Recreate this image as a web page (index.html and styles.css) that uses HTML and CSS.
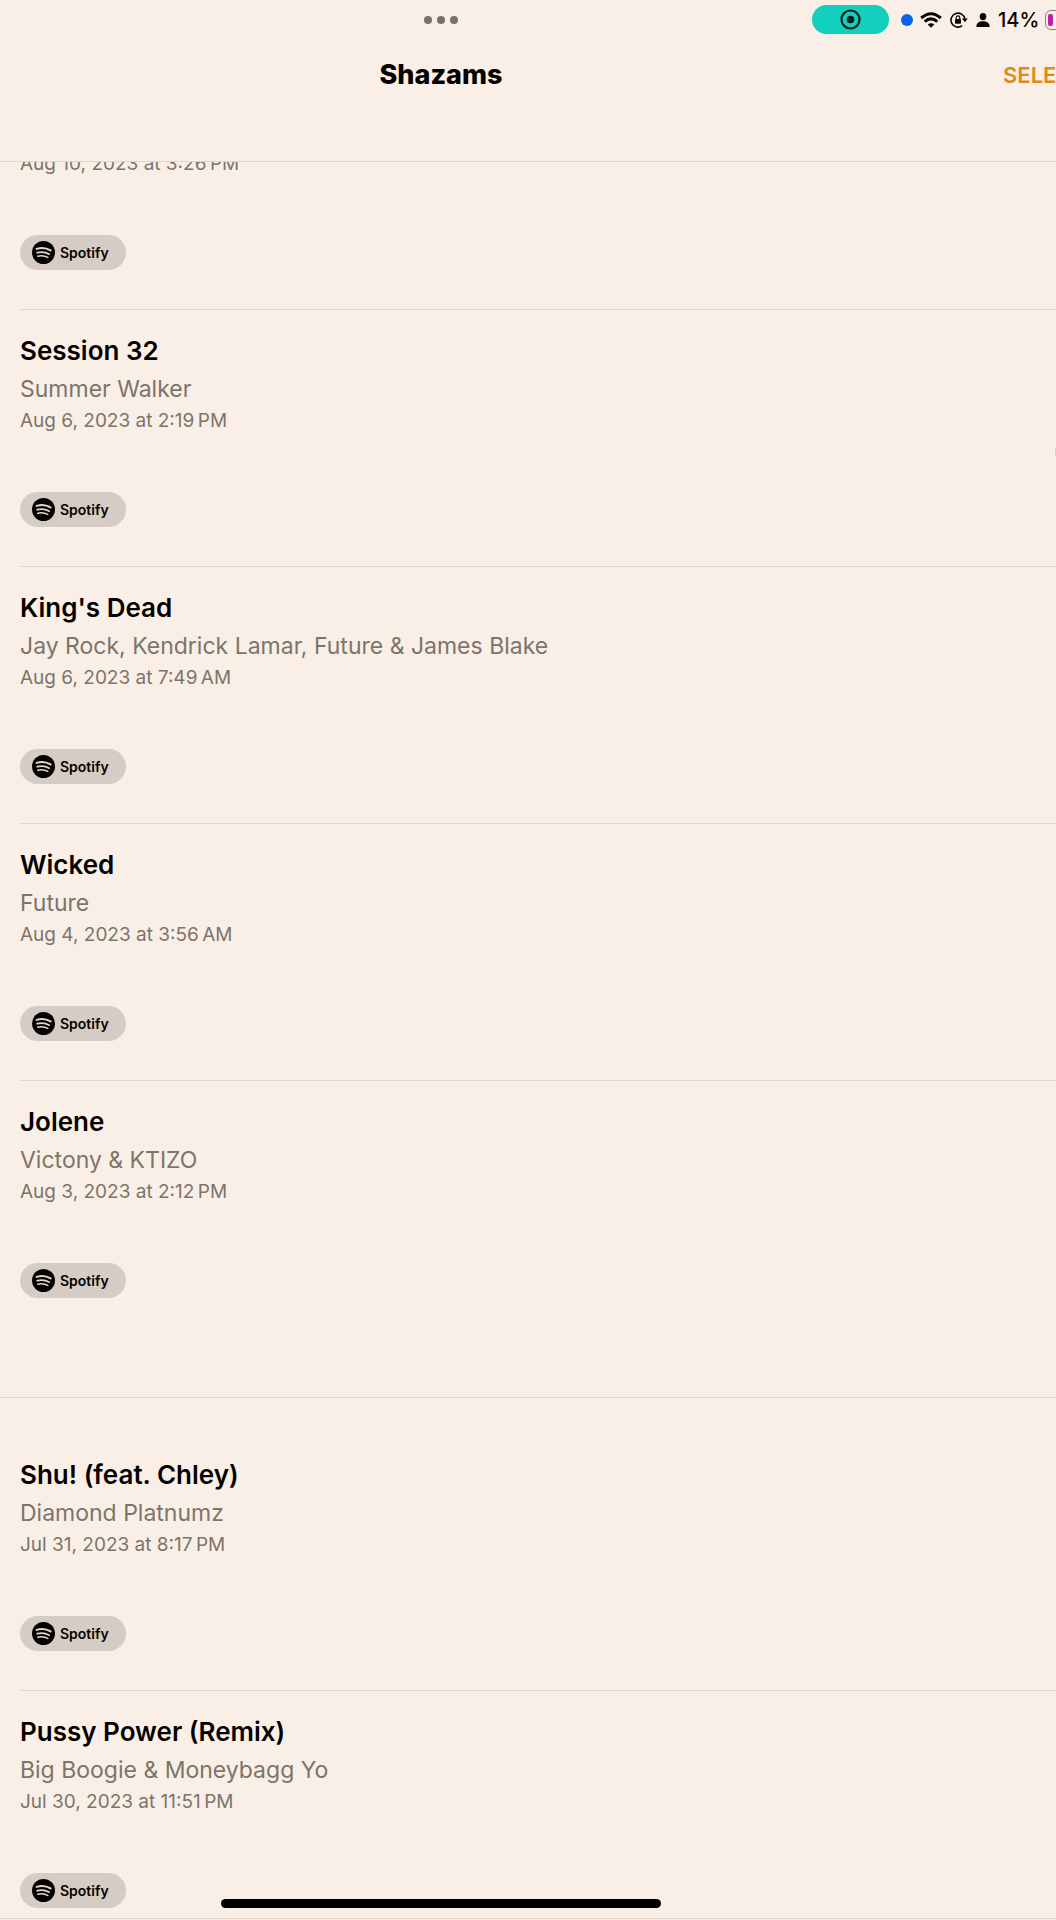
FILE: index.html
```html
<!DOCTYPE html>
<html lang="en">
<head>
<meta charset="utf-8">
<meta name="viewport" content="width=device-width, initial-scale=1">
<title>Shazams</title>
<link rel="stylesheet" href="styles.css">
</head>
<body>
<svg class="defs" aria-hidden="true">
  <symbol id="spotify" viewBox="0 0 24 24">
    <circle cx="12" cy="12" r="12" fill="#050300"/>
    <g fill="none" stroke="#e0d7cf" stroke-linecap="round">
      <path d="M4.8 8.2C9.6 6.8 15.2 7.3 19.4 9.8" stroke-width="2.1"/>
      <path d="M5.4 12.2C9.5 11 14.2 11.5 18 13.7" stroke-width="1.8"/>
      <path d="M6 15.9C9.6 15 13.3 15.4 16.5 17.2" stroke-width="1.5"/>
    </g>
  </symbol>
</svg>
<header class="header">
  <div class="status">
    <button class="dots" aria-label="Multitasking"><i></i><i></i><i></i></button>
    <div class="indicators">
      <span class="recording"><svg width="21" height="21" viewBox="0 0 21 21"><circle cx="10.5" cy="10.5" r="9" fill="none" stroke="#06231f" stroke-width="2.2"/><circle cx="10.5" cy="10.5" r="3.8" fill="#06231f"/></svg></span>
      <span class="blue"></span>
      <svg class="wifi" width="22" height="16" viewBox="0 0 22 16" fill="none" stroke="#0a0704" stroke-width="3"><path d="M1.2 6Q11-2.6 20.8 6"/><path d="M4.7 9.6Q11 4.2 17.3 9.6"/><path d="M11 15.8L7.7 12.5Q11 9.8 14.3 12.5Z" fill="#0a0704" stroke="none"/></svg>
      <svg class="lock" width="18" height="16" viewBox="0 0 18 16"><path d="M12.2 13.7A7 7 0 1 1 14.9 7" fill="none" stroke="#0a0704" stroke-width="1.6"/><path d="M12 6.6h5.8L14.9 10.3z" fill="#0a0704"/><rect x="5" y="7" width="6" height="4.8" rx=".8" fill="#0a0704"/><path d="M6.2 7.3V5.7a1.8 1.8 0 0 1 3.6 0v1.6" fill="none" stroke="#0a0704" stroke-width="1.2"/></svg>
      <svg class="person" width="14" height="14" viewBox="0 0 14 14" fill="#0a0704"><ellipse cx="7" cy="3.6" rx="3.3" ry="3.6"/><path d="M.5 14C-.2 10.7 3 8.3 7 8.3s7.2 2.4 6.5 5.7z"/></svg>
      <span class="percent">14%</span>
      <span class="battery"></span>
    </div>
  </div>
  <div class="bar">
    <h1>Shazams</h1>
    <button class="select">SELECT</button>
  </div>
</header>
<main>
  <section class="group">
    <article class="track partial">
      <time>Aug 10, 2023 at 3:26&#8201;PM</time>
      <button class="spotify"><svg><use href="#spotify"/></svg>Spotify</button>
    </article>
    <article class="track">
      <h2>Session 32</h2>
      <p>Summer Walker</p>
      <time>Aug 6, 2023 at 2:19&#8201;PM</time>
      <button class="spotify"><svg><use href="#spotify"/></svg>Spotify</button>
      <span class="more"></span>
    </article>
    <article class="track">
      <h2>King's Dead</h2>
      <p>Jay Rock, Kendrick Lamar, Future &amp; James Blake</p>
      <time>Aug 6, 2023 at 7:49&#8201;AM</time>
      <button class="spotify"><svg><use href="#spotify"/></svg>Spotify</button>
    </article>
    <article class="track">
      <h2>Wicked</h2>
      <p>Future</p>
      <time>Aug 4, 2023 at 3:56&#8201;AM</time>
      <button class="spotify"><svg><use href="#spotify"/></svg>Spotify</button>
    </article>
    <article class="track">
      <h2>Jolene</h2>
      <p>Victony &amp; KTIZO</p>
      <time>Aug 3, 2023 at 2:12&#8201;PM</time>
      <button class="spotify"><svg><use href="#spotify"/></svg>Spotify</button>
    </article>
  </section>
  <section class="group">
    <article class="track">
      <h2>Shu! (feat. Chley)</h2>
      <p>Diamond Platnumz</p>
      <time>Jul 31, 2023 at 8:17&#8201;PM</time>
      <button class="spotify"><svg><use href="#spotify"/></svg>Spotify</button>
    </article>
    <article class="track">
      <h2>Pussy Power (Remix)</h2>
      <p>Big Boogie &amp; Moneybagg Yo</p>
      <time>Jul 30, 2023 at 11:51&#8201;PM</time>
      <button class="spotify"><svg><use href="#spotify"/></svg>Spotify</button>
    </article>
  </section>
</main>
<div class="home"></div>
</body>
</html>
```
FILE: styles.css
```css
* { box-sizing: border-box; }
body {
  margin: 0;
  background: #f9efe6;
  color: #050300;
  font-family: Inter, "Liberation Sans", sans-serif;
  overflow-x: hidden;
}
h1, h2, p { margin: 0; }
button {
  border: 0;
  padding: 0;
  background: none;
  color: inherit;
  font: inherit;
}
.defs { display: none; }

.header {
  position: sticky;
  top: 0;
  z-index: 1;
  height: 162px;
  background: #f9efe6;
  border-bottom: 1px solid #ded5cd;
}
.status, .bar {
  display: grid;
  align-items: center;
}
.status {
  height: 39px;
  grid-template-columns: 1fr auto;
}
.dots {
  display: flex;
  gap: 5px;
  justify-self: center;
  margin-left: 70px;
}
.dots i {
  width: 8px;
  height: 8px;
  border-radius: 50%;
  background: #7b7067;
}
.indicators {
  display: flex;
  align-items: center;
  width: 244px;
  overflow: hidden;
}
.indicators > * { flex: none; }
.recording {
  display: grid;
  place-items: center;
  width: 77px;
  height: 29px;
  border-radius: 15px;
  background: #13cfbd;
}
.blue {
  width: 12px;
  height: 12px;
  margin-left: 12px;
  border-radius: 50%;
  background: #0a63ea;
}
.wifi { margin-left: 7px; }
.lock { margin-left: 8px; }
.person { margin-left: 8px; }
.percent {
  width: 55px;
  padding-left: 8px;
  font-size: 20px;
  font-weight: 500;
  line-height: 24px;
}
.battery {
  width: 36px;
  height: 20px;
  padding: 3px 2px;
  border: 1px solid #8f8781;
  border-radius: 6px;
}
.battery::before {
  content: "";
  display: block;
  width: 5px;
  height: 12px;
  border-radius: 2px;
  background: #bd1fa5;
}
.bar {
  height: 71px;
  grid-template-columns: 1fr 53px;
}
.bar h1 {
  justify-self: center;
  margin-left: -121px;
  font-size: 27px;
  font-weight: 800;
  line-height: 32px;
}
.select {
  overflow: hidden;
  color: #df8b1c;
  font-size: 22px;
  font-weight: 600;
  line-height: 28px;
  text-align: left;
}

.group + .group {
  padding-top: 36px;
  border-top: 1px solid #e1d8d0;
}
.group:first-child { padding-bottom: 60px; }
.track {
  position: relative;
  display: flex;
  flex-direction: column;
  align-items: flex-start;
  margin-left: 20px;
  padding: 25px 0 39px;
  border-bottom: 1px solid #e1d8d0;
}
.group:first-child .track:last-child { border-bottom: 0; }
.group:last-child .track:last-child {
  margin-left: 0;
  padding-left: 20px;
  padding-bottom: 10px;
}
.track.partial {
  margin-top: -10px;
  padding-top: 0;
}
.track h2 {
  font-size: 26px;
  font-weight: 600;
  line-height: 32px;
}
.track p {
  margin-top: 6px;
  color: #7d746b;
  font-size: 23px;
  line-height: 32px;
}
.track time {
  color: #7d746b;
  font-size: 19px;
  line-height: 24px;
}
.track p + time { margin-top: 4px; }
.spotify {
  display: flex;
  align-items: center;
  gap: 5px;
  width: 106px;
  height: 35px;
  margin-top: 59px;
  padding-left: 12px;
  border-radius: 18px;
  background: #d5ccc5;
  font-size: 14px;
  font-weight: 600;
}
.spotify svg {
  width: 23px;
  height: 23px;
}
.more {
  position: absolute;
  top: 138px;
  right: 0;
  width: 1px;
  height: 8px;
  background: #d8cfc7;
}
.home {
  position: fixed;
  bottom: 12px;
  left: 221px;
  width: 440px;
  height: 9px;
  border-radius: 5px;
  background: #000;
}
```
